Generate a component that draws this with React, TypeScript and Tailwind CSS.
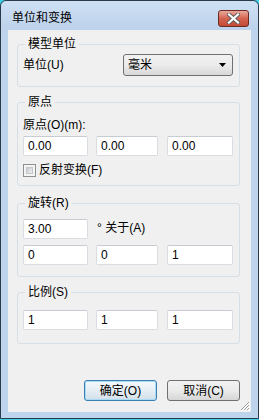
import React from 'react';

const font = { fontFamily: '"Liberation Sans", "Noto Sans CJK SC", sans-serif' };

function Field({ value, w }: { value: string; w: string }) {
  return (
    <div
      className={`${w} h-[20px] bg-white border border-[#d9dde2] border-t-[#c7ccd3] rounded-[2px] pl-[4px] text-[12px] leading-[18px] text-black`}
    >
      {value}
    </div>
  );
}

function Group({
  title,
  className,
  children,
}: {
  title: string;
  className: string;
  children: React.ReactNode;
}) {
  return (
    <fieldset
      className={`ml-[9px] w-[223px] border border-[#d5dfe5] rounded-[3px] pl-[5px] pr-[6px] ${className}`}
    >
      <legend className="ml-[2px] px-[3px] text-[12px] leading-[16px] text-black">{title}</legend>
      {children}
    </fieldset>
  );
}

function Row({ values }: { values: string[] }) {
  return (
    <div className="flex gap-[8px]">
      <Field value={values[0]} w="w-[65px]" />
      <Field value={values[1]} w="w-[62px]" />
      <Field value={values[2]} w="w-[66px] ml-[1px]" />
    </div>
  );
}

export default function App() {
  return (
    <div style={font} className="w-[259px] h-[420px] bg-[#3ad0e8]">
      <div className="w-[259px] h-[419px] border border-[#2b3a4a] rounded-t-[6px] bg-[#bed3ec] flex flex-col">
        {/* title bar */}
        <div className="h-[29px] flex items-start rounded-t-[6px] bg-gradient-to-b from-[#cfe0f3] to-[#bcd2eb]">
          <span className="ml-[11px] mt-[9px] text-[12px] leading-[16px] text-black">单位和变换</span>
          <div className="ml-auto mr-[9px] mt-[9px] w-[31px] h-[17px] rounded-[3px] border border-[#6b2a22] bg-gradient-to-b from-[#e9a99b] via-[#d4634f] to-[#c24a35] flex items-center justify-center">
            <svg width="13" height="11" viewBox="0 0 13 11">
              <path
                d="M2 1.5 L11 9.5 M11 1.5 L2 9.5"
                stroke="#5a5a5a"
                strokeWidth="4"
                strokeLinecap="square"
              />
              <path
                d="M2 1.5 L11 9.5 M11 1.5 L2 9.5"
                stroke="#ffffff"
                strokeWidth="2.2"
                strokeLinecap="square"
              />
            </svg>
          </div>
        </div>

        {/* client area */}
        <div className="mx-[7px] h-[382px] bg-[#f0f0f0] flex flex-col relative">
          <Group title="模型单位" className="mt-[6px] pb-[10px]">
            <div className="mt-[2px] flex items-center">
              <span className="text-[12px] leading-[16px] text-black">单位(U)</span>
              <div className="ml-auto w-[110px] h-[22px] rounded-[3px] border border-[#707070] bg-gradient-to-b from-[#f2f2f2] via-[#ebebeb] to-[#d8d8d8] flex items-center pl-[4px] pr-[6px]">
                <span className="text-[12px] leading-[16px] text-black">毫米</span>
                <svg className="ml-auto" width="7" height="4" viewBox="0 0 7 4">
                  <path d="M0 0 H7 L3.5 4 Z" fill="#000" />
                </svg>
              </div>
            </div>
          </Group>

          <Group title="原点" className="mt-[7px] pb-[7px]">
            <div className="mt-[7px] text-[12px] leading-[16px] text-black">原点(O)(m):</div>
            <div className="mt-[3px]">
              <Row values={['0.00', '0.00', '0.00']} />
            </div>
            <div className="mt-[6px] flex items-center gap-[3px]">
              <div className="w-[13px] h-[13px] border border-[#8e8f8f] bg-[#f4f4f4] p-[2px]">
                <div className="w-full h-full border border-[#c4c6c8] bg-gradient-to-br from-[#c6cacf] to-[#f0f0f0]" />
              </div>
              <span className="text-[12px] leading-[16px] text-black">反射变换(F)</span>
            </div>
          </Group>

          <Group title="旋转(R)" className="mt-[9px] pb-[11px]">
            <div className="mt-[8px] flex items-start gap-[9px]">
              <Field value="3.00" w="w-[65px]" />
              <span className="mt-[1px] text-[12px] leading-[16px] text-black">° 关于(A)</span>
            </div>
            <div className="mt-[6px]">
              <Row values={['0', '0', '1']} />
            </div>
          </Group>

          <Group title="比例(S)" className="mt-[7px] pb-[13px]">
            <div className="mt-[10px]">
              <Row values={['1', '1', '1']} />
            </div>
          </Group>

          <div className="mt-auto mb-[11px] mr-[11px] flex justify-end gap-[10px]">
            <button className="w-[73px] h-[21px] rounded-[3px] border border-[#3c7fb1] bg-gradient-to-b from-[#f4f9fd] via-[#e6eef5] to-[#d3dfe9] shadow-[inset_0_0_0_1px_#a8dcf5] text-[12px] leading-[16px] text-black">
              确定(O)
            </button>
            <button className="w-[73px] h-[21px] rounded-[3px] border border-[#707070] bg-gradient-to-b from-[#f2f2f2] via-[#ebebeb] to-[#d6d6d6] text-[12px] leading-[16px] text-black">
              取消(C)
            </button>
          </div>

          <svg className="absolute right-[1px] bottom-[1px]" width="11" height="11" viewBox="0 0 11 11">
            <path d="M10 2 L2 10 M10 5 L5 10 M10 8 L8 10" stroke="#a0a0a0" strokeWidth="1" />
            <path d="M11 3 L3 11 M11 6 L6 11 M11 9 L9 11" stroke="#ffffff" strokeWidth="1" />
          </svg>
        </div>
      </div>
    </div>
  );
}
